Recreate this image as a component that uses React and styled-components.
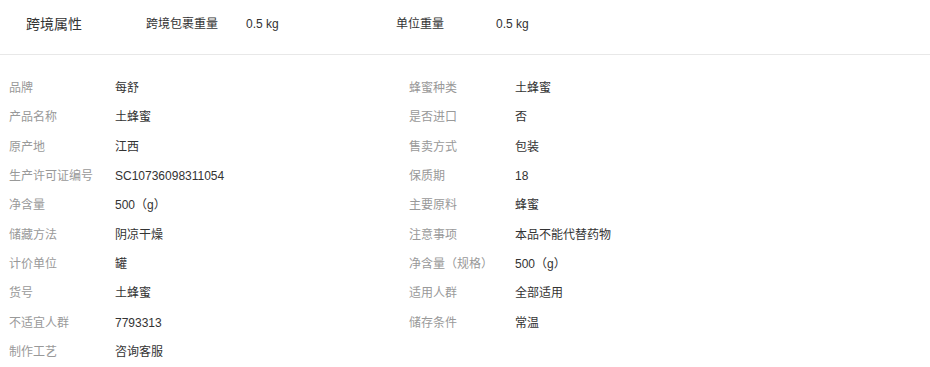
import React from 'react';
import styled, { createGlobalStyle } from 'styled-components';

const GlobalStyle = createGlobalStyle`
  body {
    margin: 0;
    background: #fff;
    font-family: "Liberation Sans", "Noto Sans CJK SC", sans-serif;
    font-size: 12px;
    color: #333;
  }
`;

const Wrapper = styled.div`
  width: 930px;
`;

const Header = styled.div`
  display: flex;
  align-items: flex-start;
  height: 55px;
  padding-top: 14px;
  box-sizing: border-box;
  border-bottom: 1px solid #e8e8e8;
`;

const Title = styled.div`
  width: 120px;
  padding-left: 26px;
  font-size: 14px;
  line-height: 20px;
  color: #333;
`;

const HeadItem = styled.div`
  display: flex;
  width: 250px;
  line-height: 20px;
`;

const HeadLabel = styled.span`
  width: 100px;
  color: #333;
`;

const HeadValue = styled.span`
  color: #333;
`;

const Grid = styled.div`
  display: grid;
  grid-template-columns: 400px 400px;
  grid-auto-rows: 29.33px;
  padding: 19px 0 0 9px;
`;

const Item = styled.div`
  display: flex;
  line-height: 29.33px;
  white-space: nowrap;
`;

const Label = styled.span`
  width: 106px;
  flex-shrink: 0;
  color: #999;
`;

const Value = styled.span`
  color: #333;
`;

const crossBorder = [
  { label: '跨境包裹重量', value: '0.5 kg' },
  { label: '单位重量', value: '0.5 kg' },
];

const attrs = [
  ['品牌', '每舒'],
  ['蜂蜜种类', '土蜂蜜'],
  ['产品名称', '土蜂蜜'],
  ['是否进口', '否'],
  ['原产地', '江西'],
  ['售卖方式', '包装'],
  ['生产许可证编号', 'SC10736098311054'],
  ['保质期', '18'],
  ['净含量', '500（g）'],
  ['主要原料', '蜂蜜'],
  ['储藏方法', '阴凉干燥'],
  ['注意事项', '本品不能代替药物'],
  ['计价单位', '罐'],
  ['净含量（规格）', '500（g）'],
  ['货号', '土蜂蜜'],
  ['适用人群', '全部适用'],
  ['不适宜人群', '7793313'],
  ['储存条件', '常温'],
  ['制作工艺', '咨询客服'],
];

export default function App() {
  return (
    <Wrapper>
      <GlobalStyle />
      <Header>
        <Title>跨境属性</Title>
        {crossBorder.map((it) => (
          <HeadItem key={it.label}>
            <HeadLabel>{it.label}</HeadLabel>
            <HeadValue>{it.value}</HeadValue>
          </HeadItem>
        ))}
      </Header>
      <Grid>
        {attrs.map(([label, value]) => (
          <Item key={label}>
            <Label>{label}</Label>
            <Value>{value}</Value>
          </Item>
        ))}
      </Grid>
    </Wrapper>
  );
}
